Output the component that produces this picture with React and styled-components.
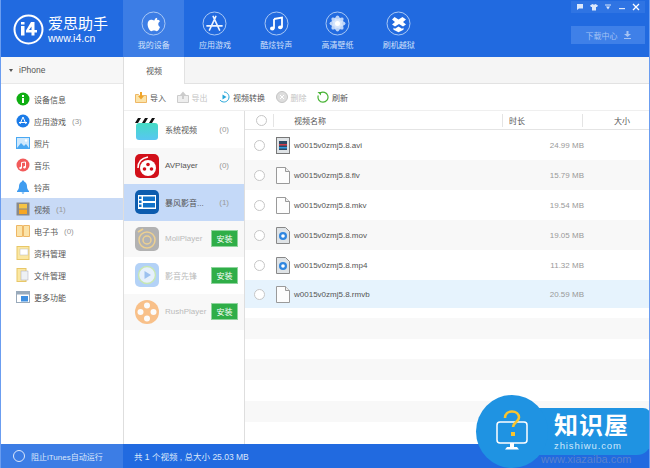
import React from 'react'
import styled, { createGlobalStyle } from 'styled-components'

const Global = createGlobalStyle`
  html, body { margin: 0; padding: 0; background: #fff; }
  body { font-family: "Liberation Sans", "Noto Sans CJK SC", sans-serif; font-size: 8px; color: #555; }
  * { box-sizing: border-box; }
`

const Win = styled.div`
  position: relative;
  width: 650px;
  height: 468px;
  overflow: hidden;
  display: flex;
  flex-direction: column;
  background: #fff;
  border: solid #6b9df0;
  border-width: 0 1px;
`
const Header = styled.header`
  height: 57px;
  margin: 0 -1px;
  background: #216ae0;
  display: flex;
  flex: none;
  position: relative;
`
const Logo = styled.div`
  width: 123px;
  display: flex;
  align-items: center;
  padding: 1px 0 0 13px;
  gap: 4px;
`
const LogoText = styled.div`
  color: #fff;
  display: flex;
  flex-direction: column;
`
const LogoTitle = styled.span`
  font-size: 15px;
  line-height: 17px;
  white-space: nowrap;
`
const LogoUrl = styled.span`
  font-size: 10.5px;
  line-height: 12px;
  white-space: nowrap;
`
const NavItem = styled.div`
  width: 61.3px;
  background: ${p => (p.$active ? '#3c7de5' : 'transparent')};
  display: flex;
  flex-direction: column;
  align-items: center;
  padding-top: 11px;
  color: #d2e1fa;
  font-size: 8px;
  gap: 4px;
  line-height: 11px;
`
const WinButtons = styled.div`
  position: absolute;
  top: 1px;
  right: 5px;
  width: 74px;
  height: 12px;
  background: #2f74e3;
  display: flex;
  align-items: center;
  justify-content: space-around;
  padding: 0 2px;
`
const Download = styled.div`
  position: absolute;
  top: 26px;
  right: 5px;
  width: 74px;
  height: 18px;
  background: #3f80e8;
  color: #a5c3f4;
  font-size: 8px;
  display: flex;
  align-items: center;
  justify-content: center;
  gap: 6px;
`
const Body = styled.div`
  flex: 1;
  display: flex;
  min-height: 0;
`
const Side = styled.aside`
  width: 123px;
  flex: none;
  border-right: 1px solid #dedede;
`
const DeviceRow = styled.div`
  height: 27px;
  display: flex;
  align-items: center;
  background: #f7f7f7;
  border-bottom: 1px solid #e8e8e8;
  padding-left: 8px;
  gap: 6px;
  font-size: 8.5px;
  color: #555;
`
const Caret = styled.i`
  width: 0;
  height: 0;
  border: solid transparent;
  border-width: 3px 2.5px 0;
  border-top-color: #555;
`
const SideList = styled.div`
  padding-top: 4px;
`
const SideRow = styled.div`
  height: 22px;
  display: flex;
  align-items: center;
  padding-left: 15px;
  gap: 4px;
  font-size: 8px;
  color: #555;
  background: ${p => (p.$active ? '#c8daf6' : 'transparent')};
`
const IconBox = styled.span`
  width: 14px;
  height: 14px;
  display: flex;
  flex: none;
`
const Count = styled.span`
  color: #999;
  margin-left: 2px;
`
const Main = styled.main`
  flex: 1;
  display: flex;
  flex-direction: column;
  min-width: 0;
`
const TabBar = styled.div`
  height: 27px;
  flex: none;
  background: #f5f5f5;
  border-bottom: 1px solid #e2e2e2;
  display: flex;
`
const Tab = styled.div`
  width: 61px;
  height: 27px;
  background: #fff;
  border-right: 1px solid #e2e2e2;
  display: flex;
  align-items: center;
  justify-content: center;
  font-size: 8px;
`
const Toolbar = styled.div`
  height: 27px;
  flex: none;
  display: flex;
  align-items: center;
  padding-left: 11px;
  gap: 10.5px;
  border-bottom: 1px solid #efefef;
`
const ToolBtn = styled.div`
  display: flex;
  align-items: center;
  gap: 3px;
  font-size: 8px;
  color: ${p => (p.$off ? '#c4c4c4' : '#555')};
`
const Panes = styled.div`
  flex: 1;
  display: flex;
  min-height: 0;
`
const Apps = styled.div`
  width: 121px;
  flex: none;
  border-right: 1px solid #dedede;
`
const AppRow = styled.div`
  height: 36.5px;
  display: flex;
  align-items: center;
  padding: 0 6px 0 11px;
  font-size: 8px;
  background: ${p => (p.$active ? '#c4d9f8' : p.$alt ? '#f8f8f8' : '#fff')};
  color: ${p => (p.$off ? '#bbb' : '#555')};
`
const AppIcon = styled.span`
  width: 24px;
  height: 24px;
  flex: none;
  display: flex;
  opacity: ${p => (p.$off ? 0.5 : 1)};
`
const AppName = styled.span`
  flex: 1;
  margin-left: 6px;
  white-space: nowrap;
`
const AppCount = styled.span`
  color: #999;
  margin-right: 9px;
`
const Install = styled.span`
  width: 27px;
  height: 17px;
  background: #2fae48;
  border: 1px solid #8fd49d;
  color: #fff;
  font-size: 8px;
  display: flex;
  align-items: center;
  justify-content: center;
`
const Table = styled.div`
  flex: 1;
  display: flex;
  flex-direction: column;
  min-width: 0;
`
const THead = styled.div`
  height: 19px;
  flex: none;
  display: grid;
  grid-template-columns: 28px 229px 80px 1fr;
  align-items: center;
  border-bottom: 1px solid #e4e4e4;
  font-size: 8px;
`
const HeadCell = styled.div`
  height: 13px;
  display: flex;
  align-items: center;
  border-left: ${p => (p.$line ? '1px solid #e4e4e4' : 'none')};
  justify-content: ${p => (p.$right ? 'flex-end' : 'flex-start')};
  padding-left: ${p => p.$pad || 0}px;
  padding-right: ${p => (p.$right ? 19 : 0)}px;
`
const Round = styled.span`
  width: 11px;
  height: 11px;
  border-radius: 50%;
  border: 1px solid #c6c6c6;
  background: #fff;
  flex: none;
  margin-left: ${p => p.$left ?? 9}px;
`
const TRow = styled.div`
  height: ${p => p.$h || 30}px;
  flex: none;
  display: flex;
  align-items: center;
  background: ${p => (p.$sel ? '#e6f3fd' : p.$alt ? '#f8f8f8' : '#fff')};
  font-size: 8px;
  color: #555;
`
const FileIcon = styled.span`
  width: 14px;
  height: 17px;
  margin-left: 11px;
  display: flex;
  flex: none;
`
const FileName = styled.span`
  margin-left: 4px;
  width: 197px;
`
const Size = styled.span`
  margin-left: auto;
  padding-right: 65px;
  color: #999;
`
const Status = styled.footer`
  height: 24px;
  flex: none;
  margin: 0 -1px;
  display: flex;
  background: #216ae0;
  color: #dbe7fb;
  font-size: 8px;
`
const StatusLeft = styled.div`
  width: 123px;
  background: #3c7de5;
  display: flex;
  align-items: center;
  padding-left: 13px;
  gap: 6px;
  white-space: nowrap;
`
const StatusDot = styled(Round)`
  width: 12px;
  height: 12px;
  background: transparent;
  border-color: #dbe7fb;
`
const StatusRight = styled.div`
  display: flex;
  align-items: center;
  padding-left: 11px;
  font-size: 8.5px;
  white-space: nowrap;
`
const Badge = styled.div`
  position: absolute;
  left: 475px;
  top: 395px;
  width: 175px;
  height: 73px;
`
const BadgeCircle = styled.div`
  position: absolute;
  left: 0;
  top: 0;
  width: 72px;
  height: 73px;
  border-radius: 50%;
  background: #1f93e2;
  display: flex;
  align-items: center;
  justify-content: center;
`
const BadgeBar = styled.div`
  position: absolute;
  left: 40px;
  top: 13px;
  width: 135px;
  height: 47px;
  border-radius: 0 8px 14px 0;
  background: #1f93e2;
  color: #fff;
  display: flex;
  flex-direction: column;
  padding-left: 38px;
  padding-top: 4px;
`
const BadgeTitle = styled.span`
  font-size: 24px;
  line-height: 28px;
  font-weight: 700;
  letter-spacing: 1px;
`
const BadgeUrl = styled.span`
  font-size: 9.5px;
  line-height: 11px;
  letter-spacing: 0.9px;
  color: #cfe8fb;
`
const Ghost = styled.span`
  position: absolute;
  left: 65px;
  top: 59px;
  font-size: 11px;
  line-height: 11px;
  color: #5a82cc;
  white-space: nowrap;
`

const Circle = ({ children }) => (
  <svg width="25" height="25" viewBox="0 0 25 25" fill="none">
    <circle cx="12.5" cy="12.5" r="11.5" stroke="#a9c8f5" strokeWidth="1" />
    {children}
  </svg>
)

const navItems = [
  {
    label: '我的设备',
    active: true,
    icon: <path fill="#fff" transform="translate(-1.8 -1.6) scale(1.15)" d="M15.6 7.2c-.9.1-1.800.7-2.200 1.700-.1.3-.2.7-.2 1 1 .1 1.900-.5 2.300-1.400.1-.4.2-.9.100-1.300zM16.600 12.900c0-1.200.7-2 1.500-2.500-.6-.9-1.600-1.300-2.500-1.300-1.100 0-1.700.6-2.600.6-.9 0-1.600-.6-2.600-.6-1.500 0-3.100 1.300-3.100 3.800 0 2.400 1.800 6 3.300 6 .8 0 1.200-.6 2.300-.6 1.100 0 1.500.6 2.300.6 1.300 0 2.500-2.300 2.900-3.700-1-.4-1.500-1.300-1.500-2.300z" />,
  },
  {
    label: '应用游戏',
    icon: (
      <g stroke="#eef4fe" strokeWidth="1.700" strokeLinecap="round">
        <path d="M13.800 5.500 7.500 19M11.200 5.500 17.500 19M5 14.800h15" />
      </g>
    ),
  },
  {
    label: '酷炫铃声',
    icon: (
      <g>
        <path d="M10 8 18 6.500V16" stroke="#fff" strokeWidth="1.800" fill="none" />
        <path d="M10 8V17.500" stroke="#fff" strokeWidth="1.800" />
        <ellipse cx="8.300" cy="17.500" rx="2.300" ry="1.900" fill="#fff" />
        <ellipse cx="16.300" cy="16.300" rx="2.300" ry="1.900" fill="#fff" />
      </g>
    ),
  },
  {
    label: '高清壁纸',
    icon: (
      <g fill="#d8e6fb">
        {[0, 45, 90, 135].map(a => (
          <ellipse key={a} cx="12.500" cy="12.500" rx="3.200" ry="8" transform={`rotate(${a} 12.500 12.500)`} opacity="0.85" />
        ))}
        <circle cx="12.500" cy="12.500" r="2.500" fill="#fff" />
      </g>
    ),
  },
  {
    label: '刷机越狱',
    icon: (
      <path fill="#fff" d="M8.500 6 12.500 8.500l4-2.500 3.500 2.500-3 2.500 3 2.500-3 2-4-2.500-4 2.500-3-2 3-2.500-3-2.500zM12.500 15.500l3.500 2.200 1.500-1v2l-5 2.500-5-2.500v-2l1.500 1z" />
    ),
  },
]

const S = ({ children }) => (
  <svg width="14" height="14" viewBox="0 0 14 14">{children}</svg>
)

const sideItems = [
  { t: '设备信息', icon: <S><circle cx="7" cy="7" r="6.500" fill="#0fae12" /><rect x="6" y="6" width="2" height="5" fill="#fff" /><rect x="6" y="3" width="2" height="2" fill="#fff" /></S> },
  { t: '应用游戏', n: '(3)', icon: <S><circle cx="7" cy="7" r="6.500" fill="#1a7be8" /><path d="M7 3 4 10M7 3l3 7M3 8.500h8" stroke="#fff" strokeWidth="1" fill="none" /></S> },
  { t: '照片', icon: <S><rect x=".5" y="1.500" width="13" height="11" fill="#cfe8fc" stroke="#4aa8f2" /><path d="M1 12 5 7l3 3 2-2 3 4z" fill="#4aa8f2" /><circle cx="10" cy="4.500" r="1.200" fill="#fff" /></S> },
  { t: '音乐', icon: <S><circle cx="7" cy="7" r="6.500" fill="#f25b5b" /><path d="M5.500 4.500 9.500 4v5" stroke="#fff" fill="none" /><path d="M5.500 4.500V10" stroke="#fff" /><circle cx="4.500" cy="10" r="1.200" fill="#fff" /><circle cx="8.500" cy="9.200" r="1.200" fill="#fff" /></S> },
  { t: '铃声', icon: <S><path d="M7 .5c.8 0 1.200.6 1.300 1.200C10.300 2.500 11 4.500 11 6.500c0 2.500 1 3.500 2 4.500v1H1v-1c1-1 2-2 2-4.500 0-2 .7-4 2.700-4.800C5.800 1.100 6.200.5 7 .5z" fill="#3f9cf0" /><path d="M5.500 12.500h3L7 14z" fill="#3f9cf0" /></S> },
  { t: '视频', n: '(1)', active: true, icon: <S><rect x=".5" y=".5" width="13" height="13" fill="#8a8a8a" /><rect x="3" y="2" width="8" height="4.500" fill="#f6c445" /><rect x="3" y="7.500" width="8" height="4.500" fill="#f6a623" /></S> },
  { t: '电子书', n: '(0)', icon: <S><path d="M.5 1.500h6v11h-6zM7.500 1.500h6v11h-6z" fill="#fbe3a8" stroke="#eeb765" /></S> },
  { t: '资料管理', icon: <S><rect x="1" y=".5" width="12" height="13" fill="#fbe7a1" stroke="#e8c768" /><rect x="4" y="3" width="8" height="6" fill="#fff" stroke="#bbb" strokeWidth=".500" /></S> },
  { t: '文件管理', icon: <S><rect x="1" y=".5" width="9" height="13" fill="#fbe7a1" stroke="#e8c768" /><rect x="5" y="3" width="7" height="9" fill="#eef1f5" stroke="#aab" strokeWidth=".500" /></S> },
  { t: '更多功能', icon: <S><rect x=".5" y="1.500" width="13" height="11" fill="#fff" stroke="#9ab" /><rect x=".5" y="1.500" width="13" height="3" fill="#9ab" /><rect x="5" y="6" width="7" height="5.500" fill="#3f8fe0" /></S> },
]

const Clapper = () => (
  <svg width="24" height="24" viewBox="0 0 24 24">
    <defs>
      <linearGradient id="clap" x1="0" y1="0" x2="0" y2="1">
        <stop offset="0" stopColor="#45dcc4" />
        <stop offset="1" stopColor="#58c6f2" />
      </linearGradient>
    </defs>
    <rect x="1" y="6" width="22" height="17" rx="3" fill="url(#clap)" />
    <path d="M0 6 3 1h3L3 6zM7 6l3-5h3l-3 5zM14 6l3-5h3l-3 5z" fill="#111" />
  </svg>
)
const AvIcon = () => (
  <svg width="24" height="24" viewBox="0 0 24 24">
    <rect width="24" height="24" rx="5" fill="#d2101a" />
    <circle cx="13" cy="14" r="8" fill="#fff" />
    <circle cx="13" cy="10.500" r="1.800" fill="#d2101a" />
    <circle cx="9.500" cy="15" r="1.800" fill="#d2101a" />
    <circle cx="16.500" cy="15" r="1.800" fill="#d2101a" />
    <path d="M3 14C3 8 7 4 13 3" stroke="#fff" strokeWidth="1.500" fill="none" />
  </svg>
)
const StormIcon = () => (
  <svg width="24" height="24" viewBox="0 0 24 24">
    <rect width="24" height="24" rx="5" fill="#0d5cae" />
    <rect x="3" y="5" width="18" height="14" fill="#fff" />
    <rect x="8" y="6.500" width="12" height="4.500" fill="#1272c8" />
    <rect x="8" y="13" width="12" height="4.500" fill="#1272c8" />
    <rect x="4" y="6.500" width="2.500" height="2.500" fill="#1272c8" />
    <rect x="4" y="10.500" width="2.500" height="2.500" fill="#1272c8" />
    <rect x="4" y="14.500" width="2.500" height="2.500" fill="#1272c8" />
  </svg>
)
const MoliIcon = () => (
  <svg width="24" height="24" viewBox="0 0 24 24">
    <rect width="24" height="24" rx="5" fill="#6e6e6e" />
    <circle cx="12" cy="13" r="8" fill="none" stroke="#e3a92c" strokeWidth="1.500" />
    <circle cx="12" cy="13" r="4" fill="none" stroke="#e3a92c" strokeWidth="1.500" />
    <path d="M3 5 8 2" stroke="#e3a92c" strokeWidth="2" />
  </svg>
)
const YingIcon = () => (
  <svg width="24" height="24" viewBox="0 0 24 24">
    <rect width="24" height="24" rx="5" fill="#6aa6f0" />
    <circle cx="12" cy="12" r="8.500" fill="#cfe2fa" stroke="#8fd06a" strokeWidth="1.500" />
    <path d="M9.500 8v8l6.500-4z" fill="#3d85e0" />
  </svg>
)
const RushIcon = () => (
  <svg width="24" height="24" viewBox="0 0 24 24">
    <circle cx="12" cy="12" r="12" fill="#f98a1d" />
    <circle cx="12" cy="5.500" r="3" fill="#fff" />
    <circle cx="12" cy="18.500" r="3" fill="#fff" />
    <circle cx="5.500" cy="12" r="3" fill="#fff" />
    <circle cx="18.500" cy="12" r="3" fill="#fff" />
  </svg>
)

const apps = [
  { name: '系统视频', n: '(0)', icon: <Clapper /> },
  { name: 'AVPlayer', n: '(0)', alt: true, icon: <AvIcon /> },
  { name: '暴风影音...', n: '(1)', active: true, icon: <StormIcon /> },
  { name: 'MoliPlayer', off: true, alt: true, icon: <MoliIcon /> },
  { name: '影音先锋', off: true, icon: <YingIcon /> },
  { name: 'RushPlayer', off: true, alt: true, icon: <RushIcon /> },
]

const BlankFile = () => (
  <svg width="14" height="17" viewBox="0 0 14 17">
    <path d="M.5.500h9l4 4v12H.5z" fill="#fdfdfd" stroke="#9a9a9a" />
    <path d="M9.500.500v4h4" fill="#eee" stroke="#9a9a9a" />
  </svg>
)
const AviFile = () => (
  <svg width="14" height="17" viewBox="0 0 14 17">
    <rect x=".5" y=".5" width="13" height="16" fill="#dfe3e6" stroke="#777" />
    <rect x="3" y="4" width="8" height="9" fill="#2d4a66" />
    <rect x="3" y="7" width="8" height="1.500" fill="#d43c4a" />
    <rect x="3" y="10" width="8" height="1.500" fill="#2f9be0" />
  </svg>
)
const QtFile = () => (
  <svg width="14" height="17" viewBox="0 0 14 17">
    <path d="M.5.500h9l4 4v12H.5z" fill="#dfe3e6" stroke="#888" />
    <circle cx="7" cy="9" r="4" fill="#2f86e0" />
    <circle cx="7" cy="9" r="1.800" fill="#fff" />
  </svg>
)

const files = [
  { name: 'w0015v0zmj5.8.avi', size: '24.99 MB', icon: <AviFile /> },
  { name: 'w0015v0zmj5.8.flv', size: '15.79 MB', icon: <BlankFile />, alt: true },
  { name: 'w0015v0zmj5.8.mkv', size: '19.54 MB', icon: <BlankFile /> },
  { name: 'w0015v0zmj5.8.mov', size: '19.05 MB', icon: <QtFile />, alt: true },
  { name: 'w0015v0zmj5.8.mp4', size: '11.32 MB', icon: <QtFile /> },
  { name: 'w0015v0zmj5.8.rmvb', size: '20.59 MB', icon: <BlankFile />, sel: true, h: 28 },
]

// empty striped rows under the file list
const fillers = [
  { h: 10 }, { h: 20.7, alt: true }, { h: 20.8 }, { h: 20.7, alt: true },
  { h: 20.8 }, { h: 20.7, alt: true }, { h: 22 },
]

export default function App() {
  return (
    <Win>
      <Global />
      <Header>
        <Logo>
          <svg width="31" height="31" viewBox="0 0 31 31">
            <circle cx="15.500" cy="15.500" r="14" fill="none" stroke="#fff" strokeWidth="2" />
            <path d="M8 12h3.500v9.500H8zM8 8h3.500v2.500H8zM18 8l-5 8.500v2h5.500v3h3v-3H24V16h-2.500V8zm.5 4.500V16h-2.500z" fill="#fff" />
          </svg>
          <LogoText>
            <LogoTitle>爱思助手</LogoTitle>
            <LogoUrl>www.i4.cn</LogoUrl>
          </LogoText>
        </Logo>
        {navItems.map(n => (
          <NavItem key={n.label} $active={n.active}>
            <Circle>{n.icon}</Circle>
            <span>{n.label}</span>
          </NavItem>
        ))}
        <WinButtons>
          <svg width="8" height="8" viewBox="0 0 8 8"><path d="M1 1h6v4.500H3L1 7z" fill="#dbe7fb" /></svg>
          <svg width="8" height="8" viewBox="0 0 8 8"><path d="M2.500 1 4 1.800 5.500 1 8 2.500 7 4H6v3.500H2V4H1L0 2.500z" fill="#dbe7fb" /></svg>
          <svg width="8" height="8" viewBox="0 0 8 8"><path d="M1 1.500h6v1H1zM2 3.500h4L4 6.500z" fill="#dbe7fb" /></svg>
          <svg width="8" height="8" viewBox="0 0 8 8"><rect x="1" y="5" width="6" height="1.200" fill="#dbe7fb" /></svg>
          <svg width="8" height="8" viewBox="0 0 8 8"><path d="M1 1l6 6M7 1 1 7" stroke="#fff" strokeWidth="1.300" /></svg>
        </WinButtons>
        <Download>
          下载中心
          <svg width="7" height="8" viewBox="0 0 7 8"><path d="M2.500 0h2v3H7L3.500 6 0 3h2.500zM0 7h7v1H0z" fill="#a5c3f4" /></svg>
        </Download>
      </Header>
      <Body>
        <Side>
          <DeviceRow><Caret />iPhone</DeviceRow>
          <SideList>
            {sideItems.map(s => (
              <SideRow key={s.t} $active={s.active}>
                <IconBox>{s.icon}</IconBox>
                <span>{s.t}</span>
                {s.n && <Count>{s.n}</Count>}
              </SideRow>
            ))}
          </SideList>
        </Side>
        <Main>
          <TabBar><Tab>视频</Tab></TabBar>
          <Toolbar>
            <ToolBtn>
              <svg width="12" height="12" viewBox="0 0 12 12"><path d="M.5 3.500h3l1 1h7v7H.5z" fill="#fbe3a8" stroke="#eeb765" /><path d="M5 1h2v4h2L6 8.500 3 5h2z" fill="#f0a52a" /></svg>
              导入
            </ToolBtn>
            <ToolBtn $off>
              <svg width="12" height="12" viewBox="0 0 12 12"><path d="M.5 4.500h11v7H.5z" fill="#eee" stroke="#ccc" /><path d="M5 8h2V4h2L6 .5 3 4h2z" fill="#ccc" /></svg>
              导出
            </ToolBtn>
            <ToolBtn>
              <svg width="12" height="12" viewBox="0 0 12 12"><path d="M6 1a5 5 0 1 1-4 8" fill="none" stroke="#25a6d9" /><path d="M4.500 3.500v5l4-2.500z" fill="#25a6d9" /></svg>
              视频转换
            </ToolBtn>
            <ToolBtn $off>
              <svg width="12" height="12" viewBox="0 0 12 12"><circle cx="6" cy="6" r="5.500" fill="#ddd" stroke="#c4c4c4" /><path d="M4 4l4 4M8 4 4 8" stroke="#fff" /></svg>
              删除
            </ToolBtn>
            <ToolBtn>
              <svg width="12" height="12" viewBox="0 0 12 12"><path d="M3 2.200a5 5 0 1 1-1.700 2.300" fill="none" stroke="#48b335" strokeWidth="1.200" /><path d="M.5 1h3.500v3.500z" fill="#48b335" /></svg>
              刷新
            </ToolBtn>
          </Toolbar>
          <Panes>
            <Apps>
              {apps.map(a => (
                <AppRow key={a.name} $active={a.active} $alt={a.alt} $off={a.off}>
                  <AppIcon $off={a.off}>{a.icon}</AppIcon>
                  <AppName>{a.name}</AppName>
                  {a.off ? <Install>安装</Install> : <AppCount>{a.n}</AppCount>}
                </AppRow>
              ))}
            </Apps>
            <Table>
              <THead>
                <HeadCell><Round $left={11} /></HeadCell>
                <HeadCell $line $pad={20}>视频名称</HeadCell>
                <HeadCell $line $pad={6}>时长</HeadCell>
                <HeadCell $line $right>大小</HeadCell>
              </THead>
              {files.map(f => (
                <TRow key={f.name} $sel={f.sel} $alt={f.alt} $h={f.h}>
                  <Round />
                  <FileIcon>{f.icon}</FileIcon>
                  <FileName>{f.name}</FileName>
                  <Size>{f.size}</Size>
                </TRow>
              ))}
              {fillers.map((r, i) => (
                <TRow key={i} $alt={r.alt} $h={r.h} />
              ))}
            </Table>
          </Panes>
        </Main>
      </Body>
      <Status>
        <StatusLeft>
          <StatusDot $left={0} />
          阻止iTunes自动运行
        </StatusLeft>
        <StatusRight>共 1 个视频 , 总大小 25.03 MB</StatusRight>
      </Status>
      <Badge>
        <Ghost>www.xiazaiba.com</Ghost>
        <BadgeBar>
          <BadgeTitle>知识屋</BadgeTitle>
          <BadgeUrl>zhishiwu.com</BadgeUrl>
        </BadgeBar>
        <BadgeCircle>
          <svg width="38" height="46" viewBox="0 0 38 46">
            <rect x="4" y="13" width="30" height="21" rx="3" fill="none" stroke="#fff" strokeWidth="1.500" />
            <path d="M14 38h10l2 2.500H12zM17 34h4v4h-4z" fill="#fff" />
            <path d="M12 9c0-4 3-6.500 7-6.500s7 2.500 7 6c0 4-6 5-6 9.500" fill="none" stroke="#f9c42e" strokeWidth="2.600" />
            <rect x="18" y="23" width="4" height="4" fill="#f9c42e" />
          </svg>
        </BadgeCircle>
      </Badge>
    </Win>
  )
}
